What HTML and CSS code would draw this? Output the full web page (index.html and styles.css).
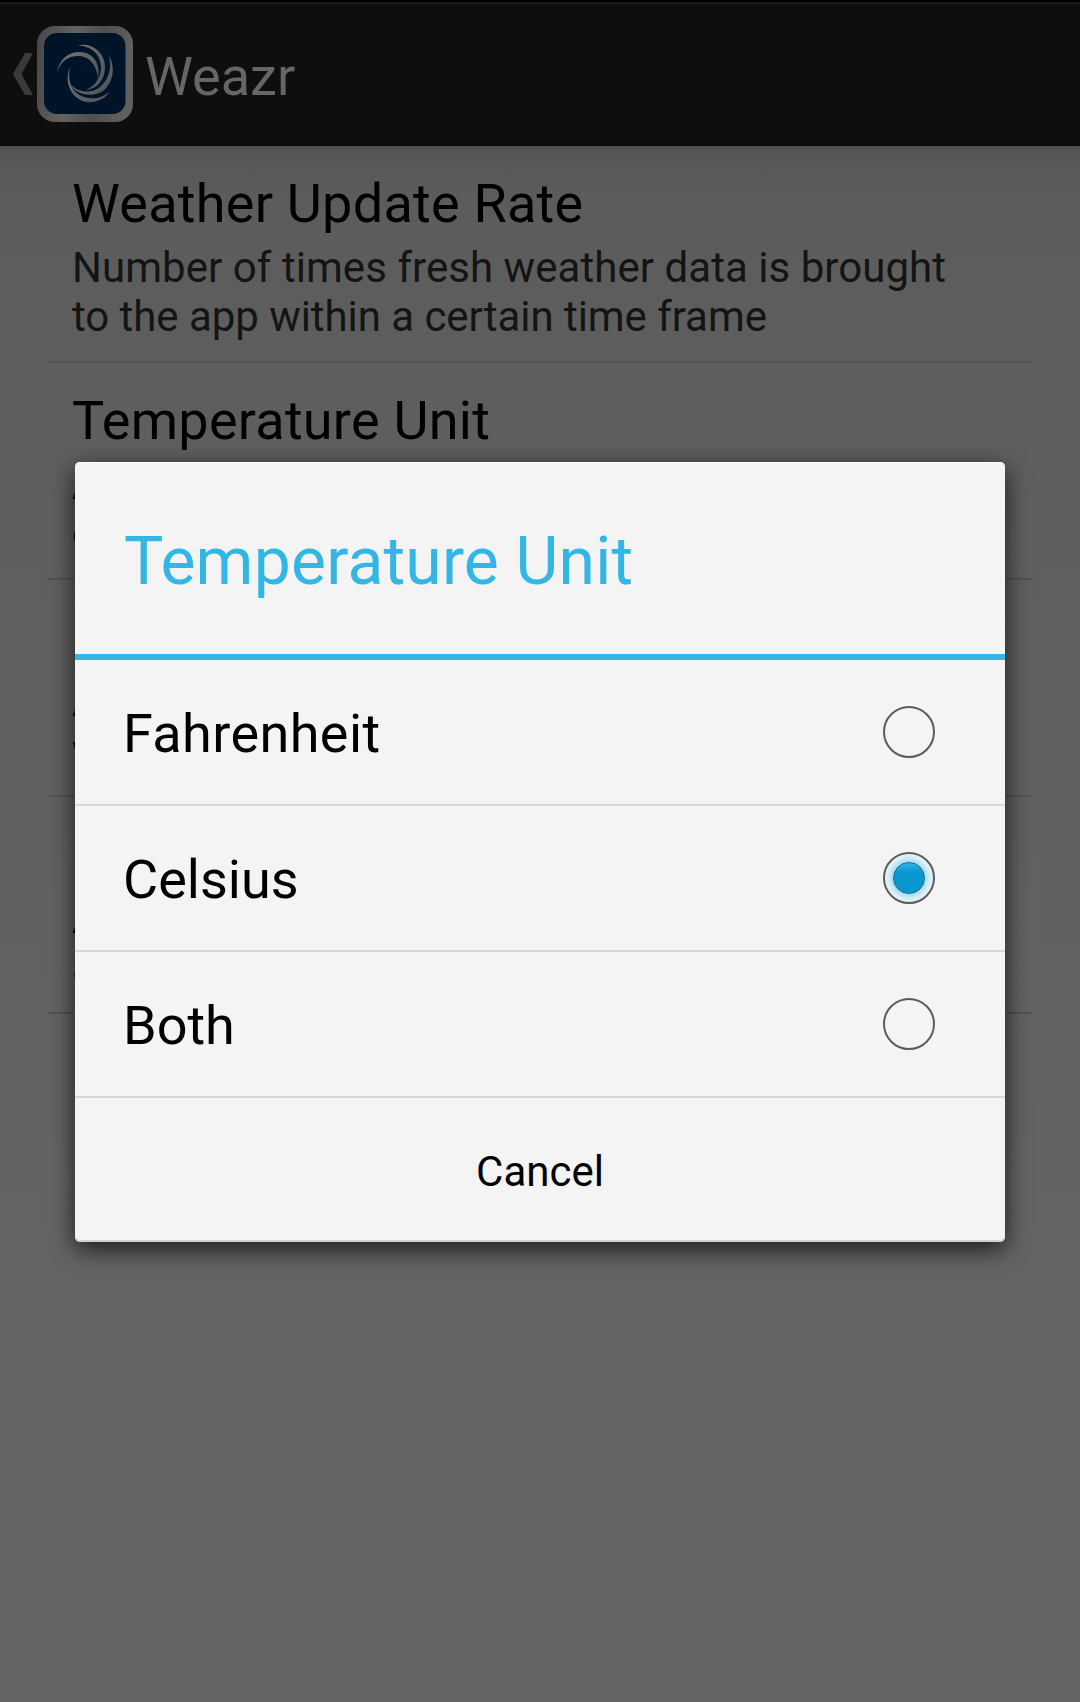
FILE: index.html
```
<!DOCTYPE html>
<html lang="en">
<head>
<meta charset="utf-8">
<title>Weazr</title>
<link rel="stylesheet" href="styles.css">
</head>
<body>
<div class="screen">
  <header class="action-bar">
    <svg class="back" viewBox="0 0 22 44" aria-hidden="true"><path d="M13 1H21L9.500 22L21 43H13L1 22Z" fill="#3a3a3a"/></svg>
    <svg class="logo" viewBox="37 26 96 96" aria-hidden="true">
      <defs>
        <linearGradient id="rim" x1="0" y1="0" x2="1" y2="0.15">
          <stop offset="0" stop-color="#464646"/><stop offset=".4" stop-color="#636363"/><stop offset=".7" stop-color="#4e4e4e"/><stop offset="1" stop-color="#606060"/>
        </linearGradient>
        <linearGradient id="swirl" x1="0" y1="0" x2="1" y2="1">
          <stop offset="0" stop-color="#727272"/><stop offset="1" stop-color="#4d5357"/>
        </linearGradient>
      </defs>
      <rect x="37" y="26" width="96" height="96" rx="18" fill="url(#rim)"/>
      <rect x="44" y="33" width="81.500" height="81" rx="13" fill="#001429"/>
      <g fill="url(#swirl)">
        <path d="M57 72C60 58 69 52 79 52C93 52 101 63 98 79C97 66 90 56 78 56C68 56 61 61 57 72Z"/>
        <path d="M78 45.500C92 42 105 53 105 67C105 80 97 89 86 90C95 86 100.500 78 101 68C101 55 92 46 78 45.500Z"/>
        <path d="M109 56C116 68 113 83 103 91C92 98 76 95 70 84C79 93 91 94 100 87C109 79 112 68 109 56Z"/>
        <path d="M70 67C64 81 70 97 84 101.500C95 104 106 99 110 91C103 98 93 100 84 97C72 93 67 82 70 67Z"/>
      </g>
    </svg>
    <h1 class="app-name">Weazr</h1>
  </header>
  <main class="settings">
    <section class="setting">
      <h2 class="setting-title rate">Weather Update Rate</h2>
      <p class="summary"><span class="line-one">Number of times fresh weather data is brought</span><br><span class="line-two">to the app within a certain time frame</span></p>
    </section>
    <section class="setting">
      <h2 class="setting-title unit">Temperature Unit</h2>
      <p class="summary covered">A<br>o</p>
    </section>
    <section class="setting">
      <h2 class="setting-title"></h2>
      <p class="summary covered">A<br>w</p>
    </section>
    <section class="setting">
      <h2 class="setting-title"></h2>
      <p class="summary covered">A<br>a</p>
    </section>
  </main>
  <div class="dialog" role="dialog" aria-labelledby="dialog-title">
    <h2 class="dialog-title" id="dialog-title">Temperature Unit</h2>
    <div class="option"><span class="fahrenheit">Fahrenheit</span><i class="radio"></i></div>
    <div class="option"><span>Celsius</span><i class="radio checked"></i></div>
    <div class="option"><span>Both</span><i class="radio"></i></div>
    <div class="cancel"><span>Cancel</span></div>
  </div>
</div>
</body>
</html>
```
FILE: styles.css
```
* { box-sizing: border-box; }
body { margin: 0; font-family: Roboto, sans-serif; }
h1, h2, p { margin: 0; font-weight: 400; }
.screen {
  position: relative;
  height: 1702px;
  overflow: hidden;
  background: linear-gradient(#505050 146px, #565656 155px, #595959 175px, #5c5c5c 200px, #5e5e5e 400px, #646464 1250px, #656565);
}
.action-bar {
  height: 146px;
  display: flex;
  align-items: center;
  padding: 2px 0 0 12px;
  background: linear-gradient(#000 2px, #1a1a1a 2px, #1a1a1a 4px, #0e0e0e 5px, #0e0e0e 140px, #090909 146px);
}
.back { width: 22px; height: 44px; margin-right: 3px; }
.logo { width: 96px; height: 96px; }
.app-name { margin-left: 12px; font-size: 54px; line-height: 64px; color: #666; padding-top: 6px; }
.settings { padding: 0 48px; }
.setting {
  height: 217px;
  padding: 26px 24px 0;
  border-bottom: 2px solid #535353;
}
.setting-title { height: 64px; font-size: 54px; line-height: 64px; white-space: nowrap; color: #000; }
.rate { letter-spacing: 0.25px; }
.unit { letter-spacing: 0.25px; }
.summary { padding-top: 7px; font-size: 42px; line-height: 49px; color: #141414; white-space: nowrap; }
.line-one { letter-spacing: 0.05px; }
.line-two { letter-spacing: -0.05px; }
.covered { color: #000; }
.dialog {
  position: absolute;
  left: 75px;
  top: 462px;
  width: 930px;
  height: 780px;
  border-radius: 5px;
  background: #f4f4f4;
  box-shadow: 0 7px 24px rgba(0, 0, 0, .75), inset 0 1px #fff, inset 0 -2px #d0d0d0;
}
.dialog-title {
  height: 198px;
  padding: 61px 49px 0;
  border-bottom: 6px solid #33b5e5;
  font-size: 66px;
  line-height: 78px;
  letter-spacing: 0.2px;
  color: #33b5e5;
}
.option {
  height: 146px;
  display: flex;
  align-items: center;
  justify-content: space-between;
  padding: 0 70px 0 48px;
  border-bottom: 2px solid #d8d8d8;
  font-size: 54px;
  line-height: 64px;
}
.option span { padding-top: 4px; }
.fahrenheit { letter-spacing: 0.4px; }
.radio {
  width: 52px;
  height: 52px;
  border: 2px solid #5c5c5c;
  border-radius: 50%;
  display: grid;
  place-items: center;
}
.checked { background: radial-gradient(circle closest-side, #8fd3ee 60%, #c9e9f5 80%, #edf5f8 100%); }
.checked::after {
  content: "";
  width: 30px;
  height: 30px;
  border: 1.500px solid #25698a;
  border-radius: 50%;
  background: linear-gradient(#33b5e5, #0a98d0 30%, #0b97cd);
}
.cancel {
  height: 144px;
  display: grid;
  place-items: center;
  padding-top: 2px;
  font-size: 42px;
}
```
